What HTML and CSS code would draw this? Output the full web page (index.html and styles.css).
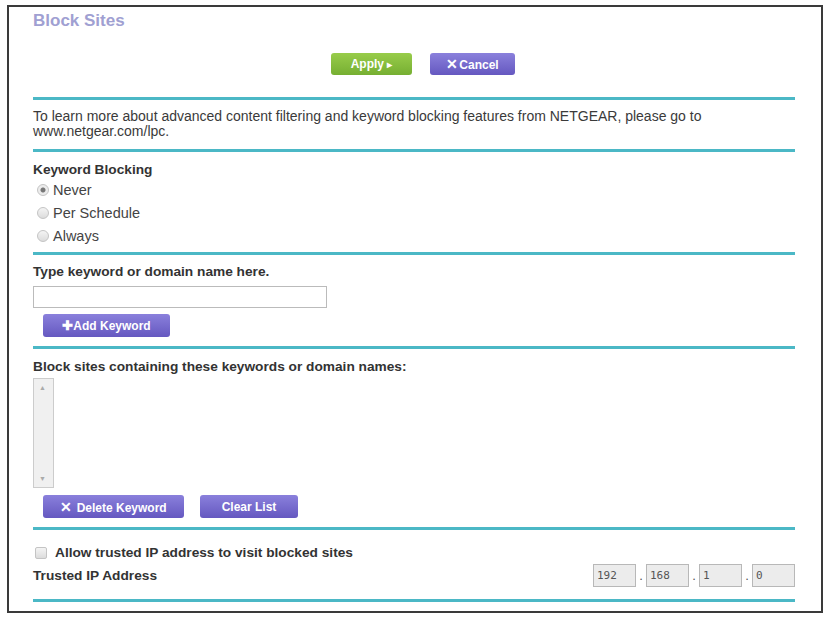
FILE: index.html
```html
<!DOCTYPE html>
<html lang="en">
<head>
    <meta charset="UTF-8">
    <title>Block Sites</title>
    <link rel="stylesheet" href="styles.css">
</head>
<body>
    <div class="frame">
        <h1 class="title">Block Sites</h1>

        <div class="actions">
            <button class="btn btn-green apply">Apply <span class="arrow">&#9656;</span></button>
            <button class="btn btn-purple cancel"><span class="x">&#10005;</span>Cancel</button>
        </div>

        <div class="section info">
            To learn more about advanced content filtering and keyword blocking features from NETGEAR, please go to<br>
            www.netgear.com/lpc.
        </div>

        <div class="section blocking">
            <div class="label">Keyword Blocking</div>
            <label class="radio"><input type="radio" name="kb" checked> Never</label>
            <label class="radio"><input type="radio" name="kb"> Per Schedule</label>
            <label class="radio"><input type="radio" name="kb"> Always</label>
        </div>

        <div class="section add">
            <div class="label">Type keyword or domain name here.</div>
            <input type="text" class="keyword">
            <button class="btn btn-purple add-btn"><span class="plus">&#10010;</span>Add Keyword</button>
        </div>

        <div class="section list">
            <div class="label">Block sites containing these keywords or domain names:</div>
            <div class="listbox">
                <span class="up">&#9650;</span>
                <span class="down">&#9660;</span>
            </div>
            <div class="list-buttons">
                <button class="btn btn-purple del-btn"><span class="x">&#10005;</span> Delete Keyword</button>
                <button class="btn btn-purple clear-btn">Clear List</button>
            </div>
        </div>

        <div class="section trusted">
            <label class="check"><input type="checkbox"> Allow trusted IP address to visit blocked sites</label>
            <div class="ip-row">
                <span class="label">Trusted IP Address</span>
                <div class="ip">
                    <input type="text" value="192" disabled>
                    <span class="dot">.</span>
                    <input type="text" value="168" disabled>
                    <span class="dot">.</span>
                    <input type="text" value="1" disabled>
                    <span class="dot">.</span>
                    <input type="text" value="0" disabled>
                </div>
            </div>
        </div>
    </div>
</body>
</html>
```

FILE: styles.css
```css
body {
    margin: 0;
    font-family: "Liberation Sans", Arial, sans-serif;
    font-size: 13px;
    color: #333;
    background: #fff;
}
.frame {
    margin: 5px 8px 5px 7px;
    border: 2px solid #3a3a3a;
    padding: 0 26px 0 24px;
    box-sizing: border-box;
    height: 608px;
}
.title {
    margin: 0;
    padding-top: 4px;
    font-size: 17px;
    line-height: 20px;
    color: #a0a0d2;
}
.actions {
    display: flex;
    justify-content: center;
    gap: 18px;
    margin-top: 22px;
    padding-left: 18px;
}
.btn {
    border: none;
    border-radius: 3px;
    color: #fff;
    font-family: "Liberation Sans", Arial, sans-serif;
    font-weight: bold;
    font-size: 12px;
    height: 22px;
    padding: 0;
    cursor: pointer;
}
.btn-green {
    background: linear-gradient(#98cc4a, #76af32);
}
.btn-purple {
    background: linear-gradient(#8a80dc, #6558c0);
}
.apply {
    width: 81px;
}
.apply .arrow {
    font-size: 10px;
}
.cancel {
    width: 85px;
}
.x {
    font-size: 14px;
    margin-right: 1px;
}
.section {
    border-top: 3px solid #4bb8c6;
}
.info {
    margin-top: 22px;
    padding-top: 9px;
    font-size: 14px;
    line-height: 15px;
    height: 40px;
    color: #3a3a3a;
}
.label {
    font-weight: bold;
    font-size: 13.7px;
    line-height: 16px;
}
.blocking {
    padding-top: 10px;
    height: 90px;
}
.radio {
    display: flex;
    align-items: center;
    height: 23px;
    padding-left: 4px;
    font-size: 14.5px;
    color: #444;
}
.radio input, .check input {
    appearance: none;
    width: 12px;
    height: 12px;
    margin: 0 4px 0 0;
    border: 1px solid #c4c4c4;
    background: linear-gradient(#f4f4f4, #dcdcdc);
}
.radio input {
    border-radius: 50%;
}
.radio input:checked {
    background: radial-gradient(circle, #777 0 2px, #ececec 3px);
}
.add {
    padding-top: 9px;
    height: 82px;
}
.keyword {
    display: block;
    margin: 6px 0 0;
    width: 294px;
    height: 22px;
    box-sizing: border-box;
    border: 1px solid #bbb;
}
.add-btn {
    margin: 6px 0 0 10px;
    width: 127px;
    height: 23px;
}
.plus {
    font-size: 13px;
}
.list {
    padding-top: 10px;
    height: 168px;
}
.listbox {
    position: relative;
    width: 21px;
    height: 110px;
    margin-top: 3px;
    border: 1px solid #ccc;
    background: #f0f0f0;
    box-sizing: border-box;
}
.listbox span {
    position: absolute;
    left: 5px;
    font-size: 7px;
    color: #aaa;
}
.up {
    top: 5px;
}
.down {
    bottom: 5px;
}
.list-buttons {
    display: flex;
    gap: 16px;
    margin: 7px 0 0 10px;
}
.del-btn {
    width: 141px;
    height: 23px;
}
.clear-btn {
    width: 98px;
    height: 23px;
}
.trusted {
    padding-top: 15px;
    height: 54px;
    border-bottom: 3px solid #4bb8c6;
}
.check {
    display: flex;
    align-items: center;
    font-weight: bold;
    font-size: 13.7px;
    padding-left: 2px;
}
.check input {
    border-radius: 2px;
    margin-right: 8px;
}
.ip-row {
    display: flex;
    justify-content: space-between;
    align-items: center;
    margin-top: 4px;
}
.ip {
    display: flex;
    align-items: center;
}
.ip input {
    width: 43px;
    height: 23px;
    box-sizing: border-box;
    border: 1px solid #b8b8b8;
    background: #ececec;
    font-family: "DejaVu Sans Mono", monospace;
    font-size: 11px;
    color: #555;
    padding: 0 3px;
}
.dot {
    width: 10px;
    text-align: center;
    color: #555;
}
```
